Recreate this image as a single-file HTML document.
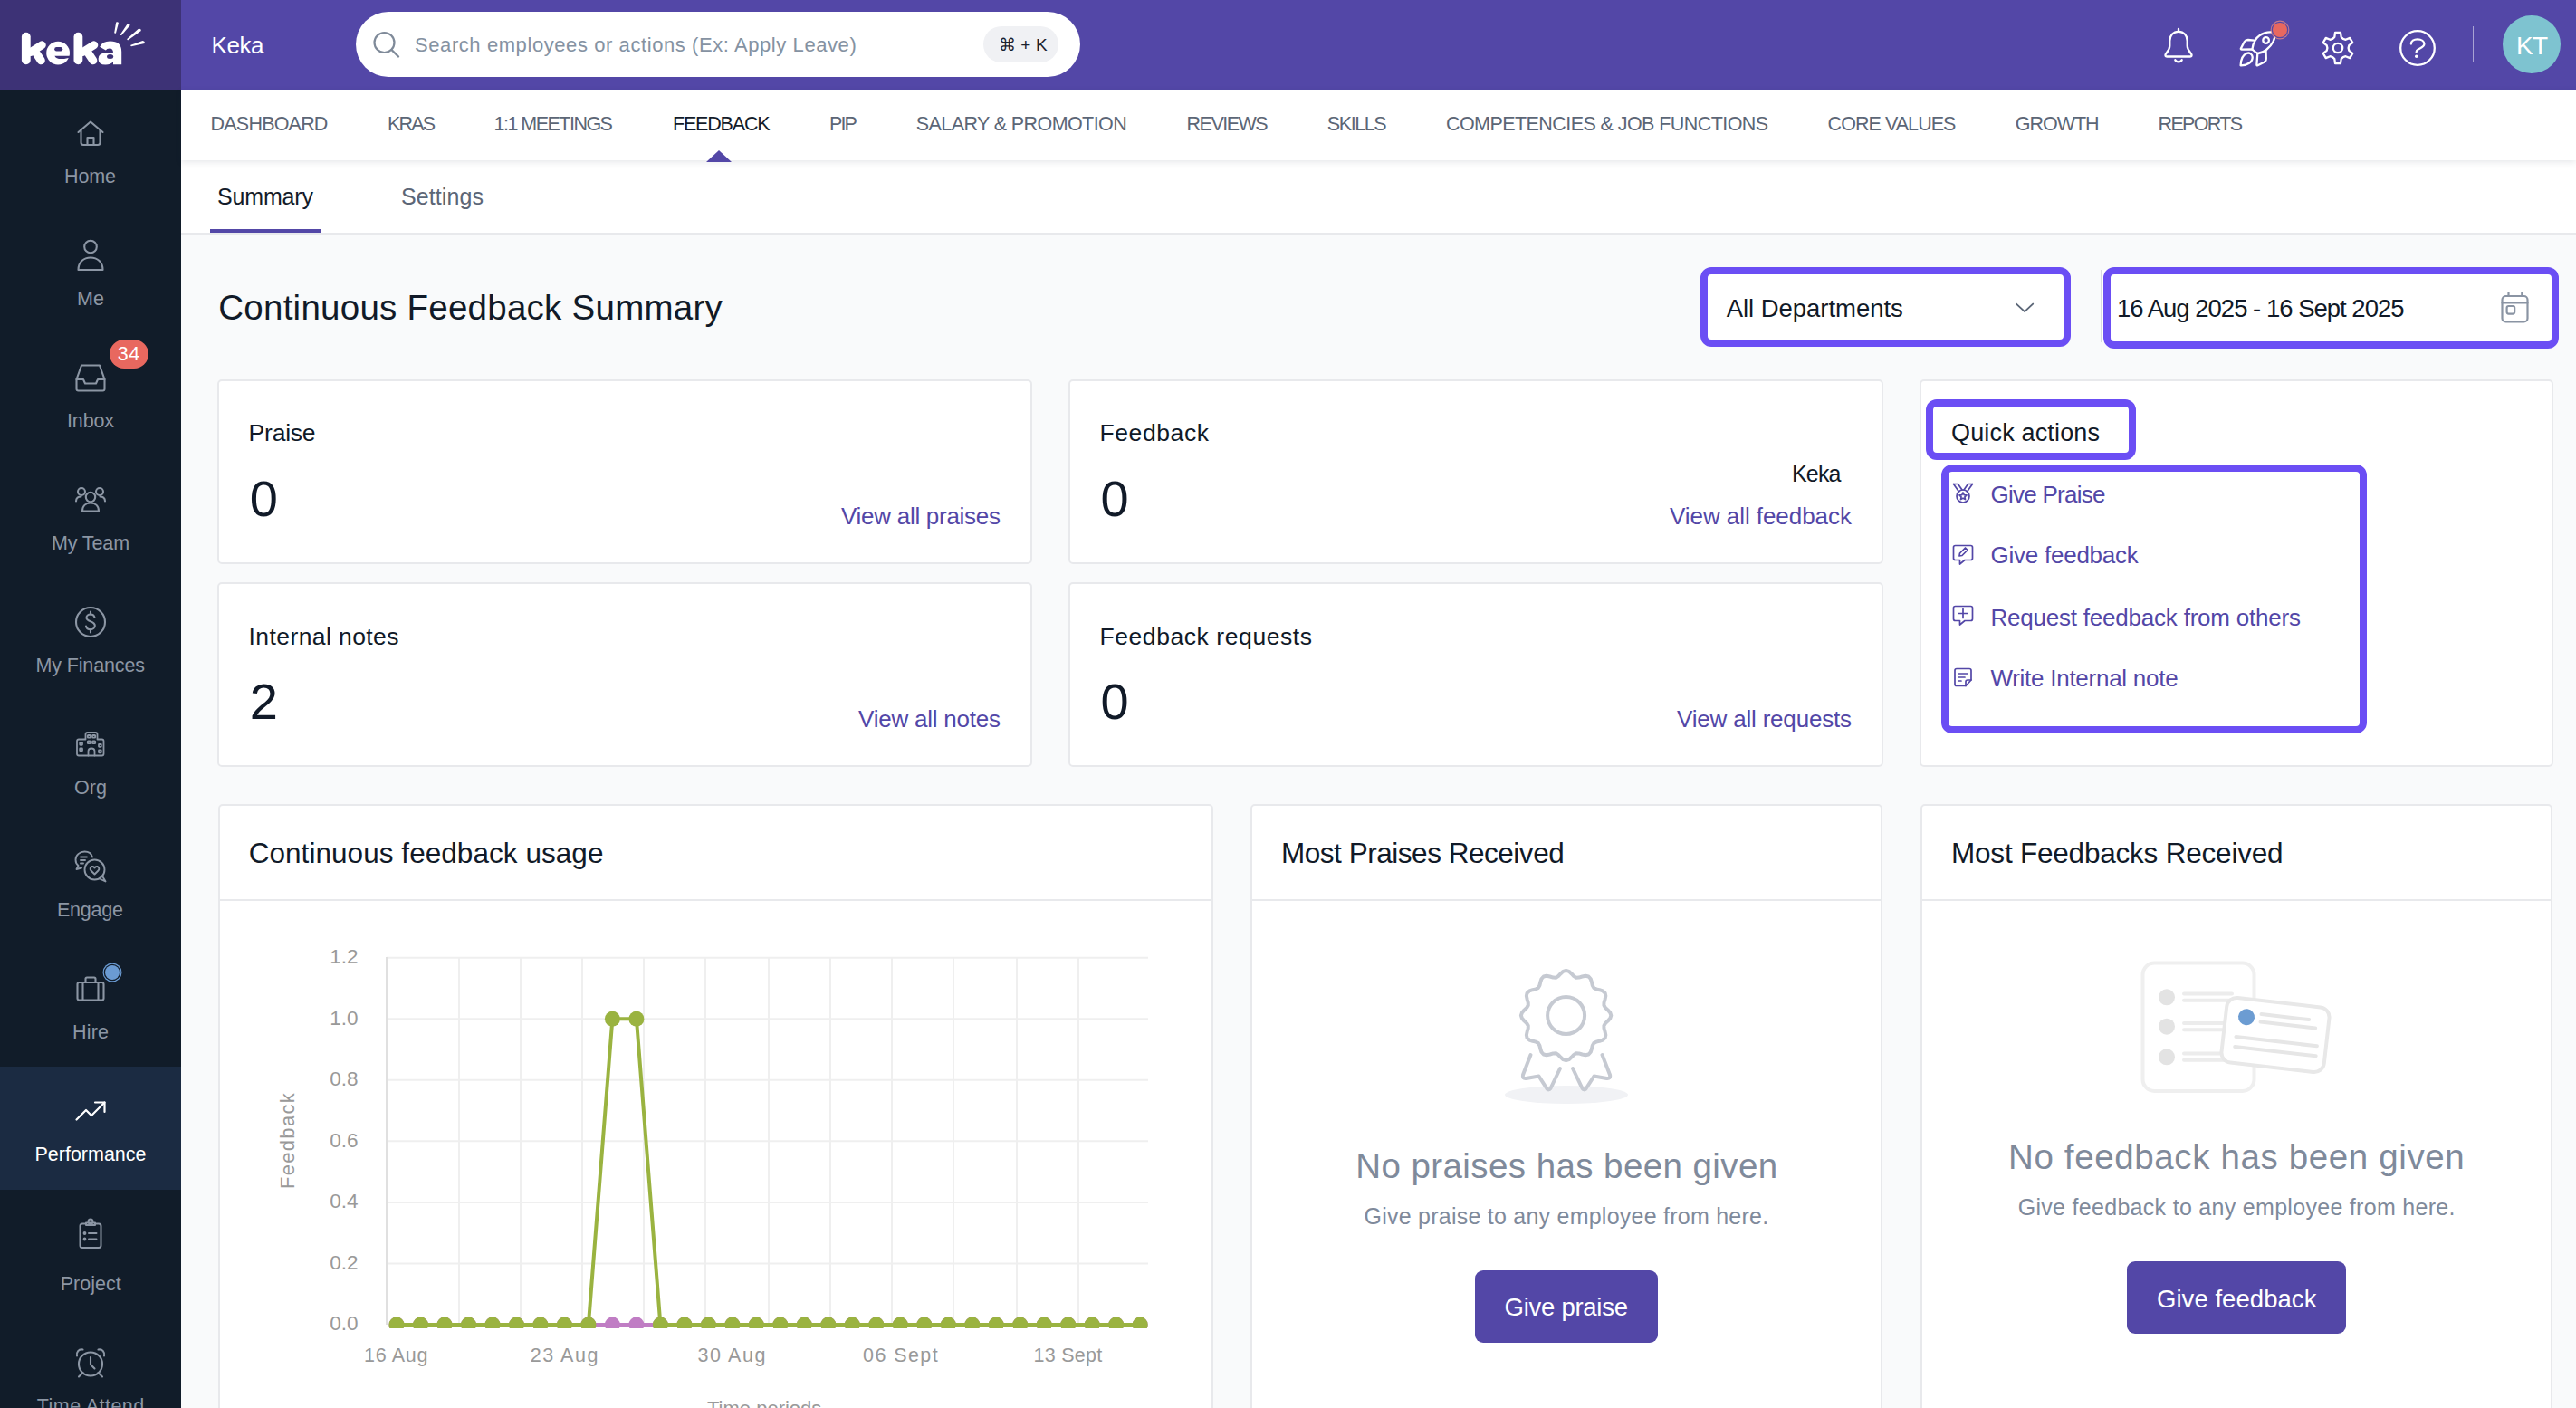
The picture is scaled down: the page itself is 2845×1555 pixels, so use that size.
<!DOCTYPE html>
<html><head><meta charset="utf-8"><title>Keka - Feedback Summary</title>
<style>
html,body{margin:0;padding:0}
body{width:2845px;height:1555px;overflow:hidden;position:relative;background:#f9fafb;font-family:"Liberation Sans",sans-serif}
.t{position:absolute;white-space:nowrap;line-height:1}
</style></head><body>
<div style="position:absolute;left:0px;top:0px;width:200px;height:99px;background:#3d3276"></div>
<div style="position:absolute;left:200px;top:0px;width:2645px;height:99px;background:#5347a7"></div>
<svg style="position:absolute;left:0px;top:0px;overflow:visible;" width="200" height="99" viewBox="0 0 200 99">
<g stroke="#fff" stroke-linecap="round" fill="none">
<path d="M28.8 40.6 L28.8 66.4" stroke-width="9.8"/>
<path d="M34 57.5 L46.3 49.8" stroke-width="9"/>
<path d="M40.5 59.5 L45.3 66.8" stroke-width="9"/>
<path d="M86.4 40.6 L86.4 66.4" stroke-width="9.8"/>
<path d="M91.5 57.5 L103.8 49.8" stroke-width="9"/>
<path d="M98 59.5 L102.8 66.8" stroke-width="9"/>
</g>
<circle cx="64.1" cy="58.6" r="12.9" fill="#fff"/>
<rect x="60.2" y="52" width="9" height="4.4" rx="2.2" fill="#3d3276"/>
<path d="M60.4 61.7 L78 61.7 L78 63.6 L71 64.9 Q62 66 60.4 61.7 Z" fill="#3d3276"/>
<path d="M110.2 51.8 Q113 45.6 121.5 45.6 Q134.2 45.6 134.2 57 L134.2 71.2 L125 71.2 L125 58.5 Q125 53.6 121 53.6 Q117.8 53.6 116.8 55.6 Z" fill="#fff"/>
<path d="M125.5 58.2 L117.5 58.2 Q108.6 58.2 108.6 65 Q108.6 71.6 116.5 71.6 Q121.8 71.6 125.5 68 Z" fill="#fff"/>
<ellipse cx="121.6" cy="62.4" rx="3.6" ry="2.5" fill="#3d3276"/>
<g fill="#fff">
<path d="M128.2 24.6 Q130.6 23.6 130.9 25.6 L128 36.6 Q126.4 37.2 126.2 36 Z"/>
<path d="M140.6 26.6 Q143.6 25.4 143.6 28 L134.2 39 Q132.8 39.4 132.9 38 Z"/>
<path d="M152.6 32 Q156 31 155.8 34 L141.5 44.2 Q140 44.4 140.3 43 Z"/>
<path d="M157.5 45 Q160.6 45.6 159.6 48 L145 51.2 Q143.8 51 144.4 49.8 Z"/>
</g>
</svg>
<div class="t" style="left:233.5px;top:37.4px;font-size:26px;color:#ffffff;letter-spacing:-0.43px;">Keka</div>
<div style="position:absolute;left:393px;top:13px;width:800px;height:72px;background:#fff;border-radius:36px"></div>
<svg style="position:absolute;left:410px;top:33px;overflow:visible;" width="34" height="32" viewBox="0 0 34 32"><circle cx="14.5" cy="14" r="11" fill="none" stroke="#7f8a99" stroke-width="2.2"/><path d="M22.5 22 L30 29.5" stroke="#7f8a99" stroke-width="2.4" stroke-linecap="round"/></svg>
<div class="t" style="left:458.0px;top:39.0px;font-size:22px;color:#8592a2;letter-spacing:0.58px;">Search employees or actions (Ex: Apply Leave)</div>
<div style="position:absolute;left:1086px;top:29px;width:83px;height:39.5px;background:#f0f1f4;border-radius:20px"></div>
<div class="t" style="left:1102.6px;top:40.2px;font-size:19px;color:#1a2230;letter-spacing:0.20px;">⌘ + K</div>
<svg style="position:absolute;left:2390px;top:31px;overflow:visible;" width="32" height="40" viewBox="0 0 32 40"><g fill="none" stroke="#fff" stroke-width="2.3" stroke-linejoin="round" stroke-linecap="round">
<path d="M16 0.9 L16 3.8"/>
<path d="M16 3.8 C10 3.8 6.3 8.5 6.3 14 L6.3 19.5 C6.3 22.5 5 24.5 3 27 L1.8 28.8 Q0.6 31.3 3.2 31.5 L28.8 31.5 Q31.4 31.3 30.2 28.8 L29 27 C27 24.5 25.7 22.5 25.7 19.5 L25.7 14 C25.7 8.5 22 3.8 16 3.8 Z"/>
<path d="M12.3 35.2 C13.5 38 18.5 38 19.7 35.2"/></g></svg>
<svg style="position:absolute;left:2474px;top:33px;overflow:visible;" width="40" height="40" viewBox="0 0 40 40"><g fill="none" stroke="#fff" stroke-width="2.3" stroke-linejoin="round" stroke-linecap="round">
<path d="M38.2 3.2 C32 1 22 3.5 17 11 C14.8 14.5 13.6 18 13.4 21.5 C15.5 23.5 17.5 25 19.5 26 C23 25.5 26.5 24 29 22 C35.5 17 39.5 9.5 38.2 3.2 Z"/>
<circle cx="28.6" cy="11.5" r="3.3"/>
<path d="M15.6 11.6 L8.8 11 Q6 11 4.8 13 L0.9 20.5 Q0.5 21.6 1.8 21.6 L13.4 21.5"/>
<path d="M28.5 22.8 L28.8 31.5 Q28.8 34.5 26.5 35.8 L19.5 39.3 Q18.4 39.8 18.4 38.5 L19.3 26"/>
<path d="M0.6 39.3 C0.8 33 3 27.5 7.5 25.8 C10.5 24.7 13.5 27 13.7 30 C14 35.5 8 39.5 0.6 39.3 Z"/>
</g></svg>
<div style="position:absolute;left:2510px;top:25px;width:16px;height:16px;border-radius:50%;background:#e8685f;box-shadow:0 0 0 1.3px #5347a7, 0 0 0 2.4px rgba(240,140,130,.75)"></div>
<svg style="position:absolute;left:2565px;top:35px;overflow:visible;" width="34" height="36" viewBox="0 0 34 36"><g fill="none" stroke="#fff" stroke-width="2.3" stroke-linejoin="round"><path d="M11.20 7.95 L13.32 5.95 L14.00 0.96 L20.00 0.96 L20.68 5.95 L22.80 7.95 L25.59 8.78 L30.25 6.88 L33.26 12.08 L29.28 15.17 L28.60 18.00 L29.28 20.83 L33.26 23.92 L30.25 29.12 L25.59 27.22 L22.80 28.05 L20.68 30.05 L20.00 35.04 L14.00 35.04 L13.32 30.05 L11.20 28.05 L8.41 27.22 L3.75 29.12 L0.74 23.92 L4.72 20.83 L5.40 18.00 L4.72 15.17 L0.74 12.08 L3.75 6.88 L8.41 8.78 Z"/><circle cx="17" cy="18" r="5.2"/></g></svg>
<svg style="position:absolute;left:2650px;top:33px;overflow:visible;" width="40" height="40" viewBox="0 0 40 40"><g fill="none" stroke="#fff" stroke-width="2.3" stroke-linecap="round" stroke-linejoin="round">
<circle cx="20" cy="20" r="18.8"/>
<path d="M12.9 15.6 C12.9 12.2 15.9 10.3 20 10.3 C24.4 10.3 27.4 12.6 27.4 15.6 C27.4 19 23.6 20 20.6 21.5 C19.2 22.3 18.6 23 18.6 24.6"/>
</g><circle cx="18.8" cy="29.3" r="1.8" fill="#fff"/></svg>
<div style="position:absolute;left:2730.5px;top:29px;width:1.5px;height:40px;background:rgba(255,255,255,.5)"></div>
<div style="position:absolute;left:2764px;top:17px;width:64px;height:64px;background:#7ec3d0;border-radius:50%"></div>
<div class="t" style="left:2779.0px;top:37.3px;font-size:28px;color:#ffffff;letter-spacing:-0.80px;">KT</div>
<div style="position:absolute;left:200px;top:99px;width:2645px;height:78px;background:#fff;box-shadow:0 2px 7px rgba(30,40,60,.11);z-index:2"></div>
<div style="position:absolute;left:200px;top:177px;width:2645px;height:82px;background:#fff;border-bottom:2px solid #e8e9ec;box-sizing:border-box"></div>
<div class="t" style="left:232.6px;top:126.8px;font-size:21.5px;color:#5c6676;letter-spacing:-0.80px;z-index:3">DASHBOARD</div>
<div class="t" style="left:428.0px;top:126.8px;font-size:21.5px;color:#5c6676;letter-spacing:-1.83px;z-index:3">KRAS</div>
<div class="t" style="left:545.6px;top:126.8px;font-size:21.5px;color:#5c6676;letter-spacing:-1.53px;z-index:3">1:1 MEETINGS</div>
<div class="t" style="left:743.0px;top:126.8px;font-size:21.5px;color:#131b29;letter-spacing:-1.19px;z-index:3">FEEDBACK</div>
<div class="t" style="left:916.0px;top:126.8px;font-size:21.5px;color:#5c6676;letter-spacing:-1.85px;z-index:3">PIP</div>
<div class="t" style="left:1011.8px;top:126.8px;font-size:21.5px;color:#5c6676;letter-spacing:-0.59px;z-index:3">SALARY &amp; PROMOTION</div>
<div class="t" style="left:1310.6px;top:126.8px;font-size:21.5px;color:#5c6676;letter-spacing:-1.53px;z-index:3">REVIEWS</div>
<div class="t" style="left:1465.8px;top:126.8px;font-size:21.5px;color:#5c6676;letter-spacing:-1.40px;z-index:3">SKILLS</div>
<div class="t" style="left:1597.0px;top:126.8px;font-size:21.5px;color:#5c6676;letter-spacing:-0.57px;z-index:3">COMPETENCIES &amp; JOB FUNCTIONS</div>
<div class="t" style="left:2018.6px;top:126.8px;font-size:21.5px;color:#5c6676;letter-spacing:-0.95px;z-index:3">CORE VALUES</div>
<div class="t" style="left:2225.7px;top:126.8px;font-size:21.5px;color:#5c6676;letter-spacing:-1.00px;z-index:3">GROWTH</div>
<div class="t" style="left:2383.6px;top:126.8px;font-size:21.5px;color:#5c6676;letter-spacing:-1.67px;z-index:3">REPORTS</div>
<svg style="position:absolute;left:780px;top:166px;overflow:visible;z-index:3" width="28" height="13" viewBox="0 0 28 13"><path d="M0 13 L14 0 L28 13 Z" fill="#5347a7"/></svg>
<div class="t" style="left:240.0px;top:204.6px;font-size:25px;color:#131b29;letter-spacing:-0.17px;">Summary</div>
<div class="t" style="left:443.0px;top:204.6px;font-size:25px;color:#5c6676;letter-spacing:0.10px;">Settings</div>
<div style="position:absolute;left:232px;top:253px;width:122px;height:4px;background:#5347a7"></div>
<div style="position:absolute;left:0px;top:99px;width:200px;height:1456px;background:#111c29"></div>
<div style="position:absolute;left:0px;top:1178px;width:200px;height:136px;background:#1b2b42"></div>
<svg style="position:absolute;left:85px;top:133px;overflow:visible;" width="30" height="28" viewBox="0 0 30 28"><g fill="none" stroke="#8c96a4" stroke-width="2.1" stroke-linecap="round" stroke-linejoin="round"><path d="M1.5 13 L15 1.5 L28.5 13"/><path d="M4.5 10.5 L4.5 24.5 Q4.5 27 7 27 L23 27 Q25.5 27 25.5 24.5 L25.5 10.5"/><path d="M11.5 27 L11.5 19 L18.5 19 L18.5 27"/></g></svg>
<svg style="position:absolute;left:85px;top:265px;overflow:visible;" width="30" height="35" viewBox="0 0 30 35"><g fill="none" stroke="#8c96a4" stroke-width="2.1" stroke-linecap="round" stroke-linejoin="round"><circle cx="15" cy="7.5" r="6.8"/><path d="M1.5 33 C1.5 24.5 7.5 19.5 15 19.5 C22.5 19.5 28.5 24.5 28.5 33 Z"/></g></svg>
<svg style="position:absolute;left:83px;top:402px;overflow:visible;" width="34" height="31" viewBox="0 0 34 31"><g fill="none" stroke="#8c96a4" stroke-width="2.1" stroke-linecap="round" stroke-linejoin="round"><path d="M7 1.5 L27 1.5 L32.5 17 L32.5 27.5 Q32.5 29.5 30.5 29.5 L3.5 29.5 Q1.5 29.5 1.5 27.5 L1.5 17 Z"/><path d="M1.5 17 L9 17 L11 21.5 L23 21.5 L25 17 L32.5 17"/></g></svg>
<div style="position:absolute;left:121px;top:375px;width:43px;height:32px;border-radius:16px;background:#e8685f"></div>
<div class="t" style="left:129.8px;top:381.3px;font-size:21.5px;color:#ffffff;letter-spacing:0.60px;">34</div>
<svg style="position:absolute;left:83px;top:538px;overflow:visible;" width="34" height="28" viewBox="0 0 34 28"><g fill="none" stroke="#8c96a4" stroke-width="2.1" stroke-linecap="round" stroke-linejoin="round"><circle cx="17" cy="11" r="5.2"/><path d="M8 26.5 C8 20.5 12 17.5 17 17.5 C22 17.5 26 20.5 26 26.5 Z"/><circle cx="7" cy="5" r="4"/><circle cx="27" cy="5" r="4"/><path d="M1 15.5 C1 12 3.5 10.5 6.5 10.5"/><path d="M33 15.5 C33 12 30.5 10.5 27.5 10.5"/></g></svg>
<svg style="position:absolute;left:83px;top:670px;overflow:visible;" width="34" height="34" viewBox="0 0 34 34"><g fill="none" stroke="#8c96a4" stroke-width="2.1" stroke-linecap="round" stroke-linejoin="round"><circle cx="17" cy="17" r="16"/><path d="M21.5 12 C21 9.5 19 8.5 17 8.5 C14.5 8.5 12.5 10 12.5 12.2 C12.5 17 21.8 15.5 21.8 21 C21.8 23.5 19.5 25.2 17 25.2 C14.5 25.2 12.5 24 12 21.5"/><path d="M17 5.5 L17 8.5 M17 25.2 L17 28.5"/></g></svg>
<svg style="position:absolute;left:84px;top:808px;overflow:visible;" width="32" height="28" viewBox="0 0 32 28"><g fill="none" stroke="#8c96a4" stroke-width="1.8" stroke-linecap="round" stroke-linejoin="round"><path d="M10.5 8.5 L10.5 3 Q10.5 1 12.5 1 L21.5 1 Q23.5 1 23.5 3 L23.5 8.5 L28.5 8.5 Q30.5 8.5 30.5 10.5 L30.5 24.5 Q30.5 26.5 28.5 26.5 L3 26.5 Q1 26.5 1 24.5 L1 10.5 Q1 8.5 3 8.5 Z"/><path d="M13.5 26.5 L13.5 21.5 Q13.5 18.5 17 18.5 Q20.5 18.5 20.5 21.5 L20.5 26.5"/><rect x="12.8" y="4" width="3.2" height="2.6" rx=".6"/><rect x="18" y="4" width="3.2" height="2.6" rx=".6"/><rect x="12.8" y="10.5" width="3.2" height="2.6" rx=".6"/><rect x="18" y="10.5" width="3.2" height="2.6" rx=".6"/><rect x="4.2" y="12" width="2.8" height="2.8" rx=".5"/><rect x="4.2" y="18.5" width="2.8" height="2.8" rx=".5"/><rect x="25" y="14" width="2.8" height="2.8" rx=".5"/><rect x="25" y="20.5" width="2.8" height="2.8" rx=".5"/></g></svg>
<svg style="position:absolute;left:82px;top:939px;overflow:visible;" width="36" height="36" viewBox="0 0 36 36"><g fill="none" stroke="#8c96a4" stroke-width="1.9" stroke-linecap="round" stroke-linejoin="round"><path d="M20 7.5 C19 3.5 15.5 1.5 11.5 1.5 C6 1.5 1.5 5.5 1.5 10.5 C1.5 13 2.5 15.5 4.5 17 L2.5 21 L8 19.5"/><path d="M7 7.5 L14 7.5 M7 11 L12 11 M7 14.5 L10 14.5"/><circle cx="22.5" cy="21.5" r="11"/><path d="M31 28.5 L34.5 34.5 L28 31.5"/><path d="M22.5 26.5 L18.5 22.5 C17 21 17.5 18.5 19.5 18 C21 17.7 22 18.5 22.5 19.5 C23 18.5 24 17.7 25.5 18 C27.5 18.5 28 21 26.5 22.5 Z"/></g></svg>
<svg style="position:absolute;left:84px;top:1078px;overflow:visible;" width="32" height="28" viewBox="0 0 32 28"><g fill="none" stroke="#8c96a4" stroke-width="2.1" stroke-linecap="round" stroke-linejoin="round"><path d="M3.5 7 L28.5 7 Q30.5 7 30.5 9 L30.5 24.5 Q30.5 26.5 28.5 26.5 L3.5 26.5 Q1.5 26.5 1.5 24.5 L1.5 9 Q1.5 7 3.5 7 Z"/><path d="M10.5 7 L10.5 3 Q10.5 1.5 12 1.5 L20 1.5 Q21.5 1.5 21.5 3 L21.5 7"/><path d="M7.5 7 L7.5 26.5 M24.5 7 L24.5 26.5"/></g></svg>
<div style="position:absolute;left:116px;top:1066px;width:16px;height:16px;border-radius:50%;background:#6b9bd3;box-shadow:0 0 0 1.3px #111c29, 0 0 0 2.5px #6b9bd3"></div>
<svg style="position:absolute;left:83px;top:1216px;overflow:visible;" width="34" height="22" viewBox="0 0 34 22"><g fill="none" stroke="#ffffff" stroke-width="2.2" stroke-linecap="round" stroke-linejoin="round"><path d="M1.5 20.5 L12 10 L18 16 L32.5 1.5"/><path d="M22 1.5 L32.5 1.5 L32.5 12"/></g></svg>
<svg style="position:absolute;left:87px;top:1345px;overflow:visible;" width="26" height="34" viewBox="0 0 26 34"><g fill="none" stroke="#8c96a4" stroke-width="2" stroke-linecap="round" stroke-linejoin="round"><path d="M8 6.5 L4 6.5 Q1.5 6.5 1.5 9 L1.5 30.5 Q1.5 33 4 33 L22 33 Q24.5 33 24.5 30.5 L24.5 9 Q24.5 6.5 22 6.5 L18 6.5"/><path d="M8 8 L18 8 L18 5.5 L8 5.5 Z"/><circle cx="13" cy="4" r="2.5"/><path d="M11 17 L19.5 17 M11 23.5 L19.5 23.5"/><circle cx="6.5" cy="17" r=".9" fill="#8c96a4"/><circle cx="6.5" cy="23.5" r=".9" fill="#8c96a4"/></g></svg>
<svg style="position:absolute;left:83px;top:1488px;overflow:visible;" width="34" height="34" viewBox="0 0 34 34"><g fill="none" stroke="#8c96a4" stroke-width="2.1" stroke-linecap="round" stroke-linejoin="round"><circle cx="17" cy="18.5" r="13"/><path d="M17 11 L17 19 L21.5 23.5"/><path d="M2 9.5 C1 5.5 4 1.5 8.5 2.5"/><path d="M32 9.5 C33 5.5 30 1.5 25.5 2.5"/><path d="M8.5 28 L4 32.5 M25.5 28 L30 32.5"/></g></svg>
<div class="t" style="left:71.0px;top:184.8px;font-size:21.5px;color:#8c96a4;letter-spacing:-0.13px;">Home</div>
<div class="t" style="left:85.0px;top:319.8px;font-size:21.5px;color:#8c96a4;letter-spacing:0.10px;">Me</div>
<div class="t" style="left:74.0px;top:454.8px;font-size:21.5px;color:#8c96a4;letter-spacing:-0.15px;">Inbox</div>
<div class="t" style="left:57.0px;top:590.2px;font-size:21.5px;color:#8c96a4;letter-spacing:-0.13px;">My Team</div>
<div class="t" style="left:39.5px;top:725.1px;font-size:21.5px;color:#8c96a4;letter-spacing:-0.14px;">My Finances</div>
<div class="t" style="left:82.0px;top:860.1px;font-size:21.5px;color:#8c96a4;letter-spacing:0.10px;">Org</div>
<div class="t" style="left:63.0px;top:994.8px;font-size:21.5px;color:#8c96a4;letter-spacing:-0.22px;">Engage</div>
<div class="t" style="left:80.0px;top:1129.8px;font-size:21.5px;color:#8c96a4;letter-spacing:0.20px;">Hire</div>
<div class="t" style="left:66.7px;top:1408.3px;font-size:21.5px;color:#8c96a4;letter-spacing:0.03px;">Project</div>
<div class="t" style="left:40.8px;top:1543.2px;font-size:21.5px;color:#8c96a4;letter-spacing:0.45px;">Time Attend</div>
<div class="t" style="left:38.5px;top:1264.8px;font-size:21.5px;color:#ffffff;letter-spacing:-0.01px;">Performance</div>
<div class="t" style="left:241.3px;top:321.4px;font-size:38.5px;color:#111a28;letter-spacing:0.25px;">Continuous Feedback Summary</div>
<div style="position:absolute;left:1878px;top:294.5px;width:408.5px;height:88.5px;background:#fff;border:8px solid #6b4ef4;border-radius:12px;box-sizing:border-box"></div>
<div class="t" style="left:1906.7px;top:326.7px;font-size:27.5px;color:#111a28;letter-spacing:-0.04px;">All Departments</div>
<svg style="position:absolute;left:2224px;top:333px;overflow:visible;" width="23" height="13" viewBox="0 0 23 13"><path d="M2.9 2.6 L12.1 11.1 L21.2 2.6" fill="none" stroke="#5b6677" stroke-width="1.9" stroke-linecap="round" stroke-linejoin="round"/></svg>
<div style="position:absolute;left:2320px;top:298px;width:13px;height:80px;background:#fff;border-left:1.5px solid #d9dce2"></div>
<div style="position:absolute;left:2322.5px;top:294.5px;width:503.5px;height:90.0px;background:#fff;border:8px solid #6b4ef4;border-radius:12px;box-sizing:border-box"></div>
<div class="t" style="left:2338.0px;top:326.7px;font-size:27.5px;color:#111a28;letter-spacing:-1.00px;">16 Aug 2025 - 16 Sept 2025</div>
<svg style="position:absolute;left:2762px;top:322px;overflow:visible;" width="31" height="34" viewBox="0 0 31 34"><g fill="none" stroke="#8a94a3" stroke-width="2.2" stroke-linecap="round" stroke-linejoin="round">
<rect x="1.5" y="5" width="28" height="28.5" rx="4"/><path d="M1.5 12.5 L29.5 12.5"/><path d="M8.5 1.2 L8.5 5 M23.3 1.2 L23.3 5"/><rect x="6.6" y="16" width="8.6" height="8.6" rx="2"/></g></svg>
<div style="position:absolute;left:240px;top:419px;width:900px;height:204px;background:#fff;border:2px solid #e8e9ec;border-radius:5px;box-sizing:border-box"></div>
<div style="position:absolute;left:1180px;top:419px;width:900px;height:204px;background:#fff;border:2px solid #e8e9ec;border-radius:5px;box-sizing:border-box"></div>
<div style="position:absolute;left:240px;top:643px;width:900px;height:204px;background:#fff;border:2px solid #e8e9ec;border-radius:5px;box-sizing:border-box"></div>
<div style="position:absolute;left:1180px;top:643px;width:900px;height:204px;background:#fff;border:2px solid #e8e9ec;border-radius:5px;box-sizing:border-box"></div>
<div style="position:absolute;left:2120px;top:419px;width:700px;height:428px;background:#fff;border:2px solid #e8e9ec;border-radius:5px;box-sizing:border-box"></div>
<div class="t" style="left:274.6px;top:465.1px;font-size:26.5px;color:#111a28;letter-spacing:-0.22px;">Praise</div>
<div class="t" style="left:275.7px;top:523.3px;font-size:56px;color:#111a28;letter-spacing:0.00px;">0</div>
<div class="t" style="left:929.0px;top:556.6px;font-size:26px;color:#5347a7;letter-spacing:-0.28px;">View all praises</div>
<div class="t" style="left:1214.5px;top:465.1px;font-size:26.5px;color:#111a28;letter-spacing:0.59px;">Feedback</div>
<div class="t" style="left:1215.5px;top:523.3px;font-size:56px;color:#111a28;letter-spacing:0.00px;">0</div>
<div class="t" style="left:1979.0px;top:510.8px;font-size:25px;color:#111a28;letter-spacing:-0.83px;">Keka</div>
<div class="t" style="left:1844.0px;top:556.6px;font-size:26px;color:#5347a7;letter-spacing:-0.06px;">View all feedback</div>
<div class="t" style="left:274.6px;top:689.6px;font-size:26.5px;color:#111a28;letter-spacing:0.41px;">Internal notes</div>
<div class="t" style="left:275.7px;top:746.9px;font-size:56px;color:#111a28;letter-spacing:0.00px;">2</div>
<div class="t" style="left:948.0px;top:780.5px;font-size:26px;color:#5347a7;letter-spacing:-0.22px;">View all notes</div>
<div class="t" style="left:1214.5px;top:689.6px;font-size:26.5px;color:#111a28;letter-spacing:0.57px;">Feedback requests</div>
<div class="t" style="left:1215.5px;top:746.9px;font-size:56px;color:#111a28;letter-spacing:0.00px;">0</div>
<div class="t" style="left:1852.0px;top:780.5px;font-size:26px;color:#5347a7;letter-spacing:-0.19px;">View all requests</div>
<div style="position:absolute;left:2126.5px;top:441.3px;width:232.5px;height:66.69999999999999px;border:8px solid #6b4ef4;border-radius:12px;box-sizing:border-box"></div>
<div class="t" style="left:2155.0px;top:465.4px;font-size:27px;color:#111a28;letter-spacing:0.16px;">Quick actions</div>
<div style="position:absolute;left:2143.8px;top:513px;width:470.6999999999998px;height:296.5px;border:8px solid #6b4ef4;border-radius:12px;box-sizing:border-box"></div>
<svg style="position:absolute;left:2156px;top:533px;overflow:visible;" width="24" height="24" viewBox="0 0 24 24"><g fill="none" stroke="#5347a7" stroke-width="1.7" stroke-linecap="round" stroke-linejoin="round"><path d="M1.5 1.5 L7.5 10 M22.5 1.5 L16.5 10 M1.5 1.5 L6.5 1.5 L11 8 M22.5 1.5 L17.5 1.5 L13 8"/><circle cx="12" cy="15" r="7"/><path d="M12 11 L13.2 13.6 L16 13.9 L13.9 15.8 L14.5 18.6 L12 17.2 L9.5 18.6 L10.1 15.8 L8 13.9 L10.8 13.6 Z"/></g></svg>
<svg style="position:absolute;left:2156px;top:601px;overflow:visible;" width="24" height="24" viewBox="0 0 24 24"><g fill="none" stroke="#5347a7" stroke-width="1.7" stroke-linecap="round" stroke-linejoin="round"><path d="M3.5 1.5 L20.5 1.5 Q22.5 1.5 22.5 3.5 L22.5 15.5 Q22.5 17.5 20.5 17.5 L14 17.5 L8.5 22 L8.5 17.5 L3.5 17.5 Q1.5 17.5 1.5 15.5 L1.5 3.5 Q1.5 1.5 3.5 1.5 Z"/><path d="M8 13 L8.5 10 L14.5 4 L17 6.5 L11 12.5 Z"/></g></svg>
<svg style="position:absolute;left:2156px;top:668px;overflow:visible;" width="24" height="24" viewBox="0 0 24 24"><g fill="none" stroke="#5347a7" stroke-width="1.7" stroke-linecap="round" stroke-linejoin="round"><path d="M3.5 1.5 L20.5 1.5 Q22.5 1.5 22.5 3.5 L22.5 15.5 Q22.5 17.5 20.5 17.5 L14 17.5 L8.5 22 L8.5 17.5 L3.5 17.5 Q1.5 17.5 1.5 15.5 L1.5 3.5 Q1.5 1.5 3.5 1.5 Z"/><path d="M12 4.5 L12 14.5 M7 9.5 L17 9.5"/></g></svg>
<svg style="position:absolute;left:2156px;top:736px;overflow:visible;" width="24" height="24" viewBox="0 0 24 24"><g fill="none" stroke="#5347a7" stroke-width="1.7" stroke-linecap="round" stroke-linejoin="round"><path d="M5 2.5 L19 2.5 Q21 2.5 21 4.5 L21 15 L15 21.5 L5 21.5 Q3 21.5 3 19.5 L3 4.5 Q3 2.5 5 2.5 Z"/><path d="M15 21.5 L15 17 Q15 15 17 15 L21 15"/><path d="M7 8 L17 8 M7 12 L14 12 M7 16 L10 16"/></g></svg>
<div class="t" style="left:2198.4px;top:532.5px;font-size:26px;color:#5347a7;letter-spacing:-0.72px;">Give Praise</div>
<div class="t" style="left:2198.4px;top:600.2px;font-size:26px;color:#5347a7;letter-spacing:-0.23px;">Give feedback</div>
<div class="t" style="left:2198.4px;top:668.6px;font-size:26px;color:#5347a7;letter-spacing:-0.21px;">Request feedback from others</div>
<div class="t" style="left:2198.4px;top:736.3px;font-size:26px;color:#5347a7;letter-spacing:-0.26px;">Write Internal note</div>
<div style="position:absolute;left:241px;top:887.5px;width:1098.5px;height:712.5px;background:#fff;border:2px solid #e8e9ec;border-radius:5px;box-sizing:border-box"></div>
<div style="position:absolute;left:242px;top:993px;width:1096.5px;height:2px;background:#e8e9ec"></div>
<div style="position:absolute;left:1381px;top:887.5px;width:698px;height:712.5px;background:#fff;border:2px solid #e8e9ec;border-radius:5px;box-sizing:border-box"></div>
<div style="position:absolute;left:1382px;top:993px;width:696px;height:2px;background:#e8e9ec"></div>
<div style="position:absolute;left:2121px;top:887.5px;width:698px;height:712.5px;background:#fff;border:2px solid #e8e9ec;border-radius:5px;box-sizing:border-box"></div>
<div style="position:absolute;left:2122px;top:993px;width:696px;height:2px;background:#e8e9ec"></div>
<div class="t" style="left:274.7px;top:926.7px;font-size:31.5px;color:#111a28;letter-spacing:0.05px;">Continuous feedback usage</div>
<div class="t" style="left:1415.0px;top:927.2px;font-size:31.5px;color:#111a28;letter-spacing:-0.47px;">Most Praises Received</div>
<div class="t" style="left:2155.0px;top:927.2px;font-size:31.5px;color:#111a28;letter-spacing:-0.21px;">Most Feedbacks Received</div>
<svg style="position:absolute;left:0;top:0" width="2845" height="1555"><line x1="427" y1="1057.7" x2="1268" y2="1057.7" stroke="#efefef" stroke-width="2"/><line x1="427" y1="1125.2" x2="1268" y2="1125.2" stroke="#efefef" stroke-width="2"/><line x1="427" y1="1192.8" x2="1268" y2="1192.8" stroke="#efefef" stroke-width="2"/><line x1="427" y1="1260.3" x2="1268" y2="1260.3" stroke="#efefef" stroke-width="2"/><line x1="427" y1="1327.9" x2="1268" y2="1327.9" stroke="#efefef" stroke-width="2"/><line x1="427" y1="1395.5" x2="1268" y2="1395.5" stroke="#efefef" stroke-width="2"/><line x1="507" y1="1057" x2="507" y2="1463" stroke="#efefef" stroke-width="2"/><line x1="575" y1="1057" x2="575" y2="1463" stroke="#efefef" stroke-width="2"/><line x1="643" y1="1057" x2="643" y2="1463" stroke="#efefef" stroke-width="2"/><line x1="711" y1="1057" x2="711" y2="1463" stroke="#efefef" stroke-width="2"/><line x1="779" y1="1057" x2="779" y2="1463" stroke="#efefef" stroke-width="2"/><line x1="849" y1="1057" x2="849" y2="1463" stroke="#efefef" stroke-width="2"/><line x1="917" y1="1057" x2="917" y2="1463" stroke="#efefef" stroke-width="2"/><line x1="985" y1="1057" x2="985" y2="1463" stroke="#efefef" stroke-width="2"/><line x1="1053" y1="1057" x2="1053" y2="1463" stroke="#efefef" stroke-width="2"/><line x1="1123" y1="1057" x2="1123" y2="1463" stroke="#efefef" stroke-width="2"/><line x1="1191" y1="1057" x2="1191" y2="1463" stroke="#efefef" stroke-width="2"/><line x1="427" y1="1057" x2="427" y2="1463" stroke="#e0e0e0" stroke-width="2"/><defs><clipPath id="pc"><rect x="427" y="1040" width="860" height="427"/></clipPath></defs><g clip-path="url(#pc)"><polyline fill="none" stroke="#c07dc4" stroke-width="4" points="438.0,1463.0 464.5,1463.0 491.0,1463.0 517.5,1463.0 544.0,1463.0 570.5,1463.0 596.9,1463.0 623.4,1463.0 649.9,1463.0 676.4,1463.0 702.9,1463.0 729.4,1463.0 755.9,1463.0 782.4,1463.0 808.9,1463.0 835.3,1463.0 861.8,1463.0 888.3,1463.0 914.8,1463.0 941.3,1463.0 967.8,1463.0 994.3,1463.0 1020.8,1463.0 1047.3,1463.0 1073.8,1463.0 1100.2,1463.0 1126.7,1463.0 1153.2,1463.0 1179.7,1463.0 1206.2,1463.0 1232.7,1463.0 1259.2,1463.0"/><circle cx="438.0" cy="1463.0" r="8.5" fill="#c07dc4"/><circle cx="464.5" cy="1463.0" r="8.5" fill="#c07dc4"/><circle cx="491.0" cy="1463.0" r="8.5" fill="#c07dc4"/><circle cx="517.5" cy="1463.0" r="8.5" fill="#c07dc4"/><circle cx="544.0" cy="1463.0" r="8.5" fill="#c07dc4"/><circle cx="570.5" cy="1463.0" r="8.5" fill="#c07dc4"/><circle cx="596.9" cy="1463.0" r="8.5" fill="#c07dc4"/><circle cx="623.4" cy="1463.0" r="8.5" fill="#c07dc4"/><circle cx="649.9" cy="1463.0" r="8.5" fill="#c07dc4"/><circle cx="676.4" cy="1463.0" r="8.5" fill="#c07dc4"/><circle cx="702.9" cy="1463.0" r="8.5" fill="#c07dc4"/><circle cx="729.4" cy="1463.0" r="8.5" fill="#c07dc4"/><circle cx="755.9" cy="1463.0" r="8.5" fill="#c07dc4"/><circle cx="782.4" cy="1463.0" r="8.5" fill="#c07dc4"/><circle cx="808.9" cy="1463.0" r="8.5" fill="#c07dc4"/><circle cx="835.3" cy="1463.0" r="8.5" fill="#c07dc4"/><circle cx="861.8" cy="1463.0" r="8.5" fill="#c07dc4"/><circle cx="888.3" cy="1463.0" r="8.5" fill="#c07dc4"/><circle cx="914.8" cy="1463.0" r="8.5" fill="#c07dc4"/><circle cx="941.3" cy="1463.0" r="8.5" fill="#c07dc4"/><circle cx="967.8" cy="1463.0" r="8.5" fill="#c07dc4"/><circle cx="994.3" cy="1463.0" r="8.5" fill="#c07dc4"/><circle cx="1020.8" cy="1463.0" r="8.5" fill="#c07dc4"/><circle cx="1047.3" cy="1463.0" r="8.5" fill="#c07dc4"/><circle cx="1073.8" cy="1463.0" r="8.5" fill="#c07dc4"/><circle cx="1100.2" cy="1463.0" r="8.5" fill="#c07dc4"/><circle cx="1126.7" cy="1463.0" r="8.5" fill="#c07dc4"/><circle cx="1153.2" cy="1463.0" r="8.5" fill="#c07dc4"/><circle cx="1179.7" cy="1463.0" r="8.5" fill="#c07dc4"/><circle cx="1206.2" cy="1463.0" r="8.5" fill="#c07dc4"/><circle cx="1232.7" cy="1463.0" r="8.5" fill="#c07dc4"/><circle cx="1259.2" cy="1463.0" r="8.5" fill="#c07dc4"/><polyline fill="none" stroke="#9ab340" stroke-width="4" stroke-linejoin="round" points="438.0,1463.0 464.5,1463.0 491.0,1463.0 517.5,1463.0 544.0,1463.0 570.5,1463.0 596.9,1463.0 623.4,1463.0 649.9,1463.0 676.4,1125.2 702.9,1125.2 729.4,1463.0 755.9,1463.0 782.4,1463.0 808.9,1463.0 835.3,1463.0 861.8,1463.0 888.3,1463.0 914.8,1463.0 941.3,1463.0 967.8,1463.0 994.3,1463.0 1020.8,1463.0 1047.3,1463.0 1073.8,1463.0 1100.2,1463.0 1126.7,1463.0 1153.2,1463.0 1179.7,1463.0 1206.2,1463.0 1232.7,1463.0 1259.2,1463.0"/><circle cx="438.0" cy="1463.0" r="8.5" fill="#9ab340"/><circle cx="464.5" cy="1463.0" r="8.5" fill="#9ab340"/><circle cx="491.0" cy="1463.0" r="8.5" fill="#9ab340"/><circle cx="517.5" cy="1463.0" r="8.5" fill="#9ab340"/><circle cx="544.0" cy="1463.0" r="8.5" fill="#9ab340"/><circle cx="570.5" cy="1463.0" r="8.5" fill="#9ab340"/><circle cx="596.9" cy="1463.0" r="8.5" fill="#9ab340"/><circle cx="623.4" cy="1463.0" r="8.5" fill="#9ab340"/><circle cx="649.9" cy="1463.0" r="8.5" fill="#9ab340"/><circle cx="729.4" cy="1463.0" r="8.5" fill="#9ab340"/><circle cx="755.9" cy="1463.0" r="8.5" fill="#9ab340"/><circle cx="782.4" cy="1463.0" r="8.5" fill="#9ab340"/><circle cx="808.9" cy="1463.0" r="8.5" fill="#9ab340"/><circle cx="835.3" cy="1463.0" r="8.5" fill="#9ab340"/><circle cx="861.8" cy="1463.0" r="8.5" fill="#9ab340"/><circle cx="888.3" cy="1463.0" r="8.5" fill="#9ab340"/><circle cx="914.8" cy="1463.0" r="8.5" fill="#9ab340"/><circle cx="941.3" cy="1463.0" r="8.5" fill="#9ab340"/><circle cx="967.8" cy="1463.0" r="8.5" fill="#9ab340"/><circle cx="994.3" cy="1463.0" r="8.5" fill="#9ab340"/><circle cx="1020.8" cy="1463.0" r="8.5" fill="#9ab340"/><circle cx="1047.3" cy="1463.0" r="8.5" fill="#9ab340"/><circle cx="1073.8" cy="1463.0" r="8.5" fill="#9ab340"/><circle cx="1100.2" cy="1463.0" r="8.5" fill="#9ab340"/><circle cx="1126.7" cy="1463.0" r="8.5" fill="#9ab340"/><circle cx="1153.2" cy="1463.0" r="8.5" fill="#9ab340"/><circle cx="1179.7" cy="1463.0" r="8.5" fill="#9ab340"/><circle cx="1206.2" cy="1463.0" r="8.5" fill="#9ab340"/><circle cx="1232.7" cy="1463.0" r="8.5" fill="#9ab340"/><circle cx="1259.2" cy="1463.0" r="8.5" fill="#9ab340"/><circle cx="676.4" cy="1125.2" r="8.5" fill="#9ab340"/><circle cx="702.9" cy="1125.2" r="8.5" fill="#9ab340"/></g></svg>
<div class="t" style="left:364.2px;top:1046.0px;font-size:22.5px;color:#999999;letter-spacing:0.00px;">1.2</div>
<div class="t" style="left:364.2px;top:1113.6px;font-size:22.5px;color:#999999;letter-spacing:0.00px;">1.0</div>
<div class="t" style="left:364.2px;top:1181.1px;font-size:22.5px;color:#999999;letter-spacing:0.00px;">0.8</div>
<div class="t" style="left:364.2px;top:1248.7px;font-size:22.5px;color:#999999;letter-spacing:0.00px;">0.6</div>
<div class="t" style="left:364.2px;top:1316.2px;font-size:22.5px;color:#999999;letter-spacing:0.00px;">0.4</div>
<div class="t" style="left:364.2px;top:1383.8px;font-size:22.5px;color:#999999;letter-spacing:0.00px;">0.2</div>
<div class="t" style="left:364.2px;top:1451.3px;font-size:22.5px;color:#999999;letter-spacing:0.00px;">0.0</div>
<div class="t" style="left:402.0px;top:1486.8px;font-size:21.5px;color:#999999;letter-spacing:0.68px;">16 Aug</div>
<div class="t" style="left:585.8px;top:1486.8px;font-size:21.5px;color:#999999;letter-spacing:1.54px;">23 Aug</div>
<div class="t" style="left:770.5px;top:1486.8px;font-size:21.5px;color:#999999;letter-spacing:1.60px;">30 Aug</div>
<div class="t" style="left:953.0px;top:1486.8px;font-size:21.5px;color:#999999;letter-spacing:1.42px;">06 Sept</div>
<div class="t" style="left:1141.4px;top:1486.8px;font-size:21.5px;color:#999999;letter-spacing:0.30px;">13 Sept</div>
<div class="t" style="left:306.7px;top:1312.5px;font-size:22px;letter-spacing:1.3px;color:#999;transform:rotate(-90deg);transform-origin:0 0">Feedback</div>
<div class="t" style="left:781.0px;top:1545.4px;font-size:22px;color:#999999;letter-spacing:0.00px;">Time periods</div>
<svg style="position:absolute;left:0;top:0" width="2845" height="1555"><ellipse cx="1730" cy="1209" rx="68" ry="10" fill="#f1f2f5"/>
<g fill="none" stroke="#c6cad2" stroke-width="4" stroke-linecap="round" stroke-linejoin="round">
<path d="M1729.60 1071.80 L1732.79 1072.84 L1735.67 1075.40 L1738.23 1078.11 L1740.81 1079.68 L1743.82 1079.61 L1747.39 1078.54 L1751.17 1077.77 L1754.45 1078.46 L1756.69 1080.96 L1757.91 1084.61 L1758.77 1088.24 L1760.22 1090.88 L1762.86 1092.33 L1766.49 1093.19 L1770.14 1094.41 L1772.64 1096.65 L1773.33 1099.93 L1772.56 1103.71 L1771.49 1107.28 L1771.42 1110.29 L1772.99 1112.87 L1775.70 1115.43 L1778.26 1118.31 L1779.30 1121.50 L1778.26 1124.69 L1775.70 1127.57 L1772.99 1130.13 L1771.42 1132.71 L1771.49 1135.72 L1772.56 1139.29 L1773.33 1143.07 L1772.64 1146.35 L1770.14 1148.59 L1766.49 1149.81 L1762.86 1150.67 L1760.22 1152.12 L1758.77 1154.76 L1757.91 1158.39 L1756.69 1162.04 L1754.45 1164.54 L1751.17 1165.23 L1747.39 1164.46 L1743.82 1163.39 L1740.81 1163.32 L1738.23 1164.89 L1735.67 1167.60 L1732.79 1170.16 L1729.60 1171.20 L1726.41 1170.16 L1723.53 1167.60 L1720.97 1164.89 L1718.39 1163.32 L1715.38 1163.39 L1711.81 1164.46 L1708.03 1165.23 L1704.75 1164.54 L1702.51 1162.04 L1701.29 1158.39 L1700.43 1154.76 L1698.98 1152.12 L1696.34 1150.67 L1692.71 1149.81 L1689.06 1148.59 L1686.56 1146.35 L1685.87 1143.07 L1686.64 1139.29 L1687.71 1135.72 L1687.78 1132.71 L1686.21 1130.13 L1683.50 1127.57 L1680.94 1124.69 L1679.90 1121.50 L1680.94 1118.31 L1683.50 1115.43 L1686.21 1112.87 L1687.78 1110.29 L1687.71 1107.28 L1686.64 1103.71 L1685.87 1099.93 L1686.56 1096.65 L1689.06 1094.41 L1692.71 1093.19 L1696.34 1092.33 L1698.98 1090.88 L1700.43 1088.24 L1701.29 1084.61 L1702.51 1080.96 L1704.75 1078.46 L1708.03 1077.77 L1711.81 1078.54 L1715.38 1079.61 L1718.39 1079.68 L1720.97 1078.11 L1723.53 1075.40 L1726.41 1072.84 L1729.60 1071.80Z"/>
<circle cx="1729.6" cy="1121.5" r="20.5"/>
<path d="M1690.5 1165 L1682 1187 Q1681 1191.5 1685.5 1191 L1699.5 1188.5 L1708.5 1202.5 Q1710.5 1204.5 1712.5 1202 L1723 1180"/>
<path d="M1769.5 1165 L1778 1187 Q1779 1191.5 1774.5 1191 L1760.5 1188.5 L1751.5 1202.5 Q1749.5 1204.5 1747.5 1202 L1737 1180"/>
</g></svg>
<div class="t" style="left:1497.3px;top:1268.6px;font-size:38.5px;color:#7f8a9b;letter-spacing:0.42px;">No praises has been given</div>
<div class="t" style="left:1506.5px;top:1330.8px;font-size:25px;color:#7f8a9b;letter-spacing:0.24px;">Give praise to any employee from here.</div>
<div style="position:absolute;left:1629px;top:1403px;width:202px;height:80px;background:#5347a7;border-radius:9px"></div>
<div class="t" style="left:1661.6px;top:1430.2px;font-size:27.5px;color:#ffffff;letter-spacing:-0.27px;">Give praise</div>
<svg style="position:absolute;left:0;top:0" width="2845" height="1555"><g>
<rect x="2366.5" y="1063.5" width="123" height="141.5" rx="13" fill="#fff" stroke="#efefef" stroke-width="4"/>
<circle cx="2393" cy="1101.3" r="9" fill="#e3e3e3"/><circle cx="2393" cy="1133.7" r="9" fill="#e3e3e3"/><circle cx="2393" cy="1167.3" r="9" fill="#e3e3e3"/>
<g stroke="#ececec" stroke-width="4" stroke-linecap="round">
<path d="M2412 1097.6 L2465 1097.6 M2412 1104.8 L2465 1104.8"/>
<path d="M2412 1130 L2465 1130 M2412 1137.2 L2465 1137.2"/>
<path d="M2412 1163.5 L2465 1163.5 M2412 1170.7 L2465 1170.7"/>
</g>
<g transform="rotate(6.5 2513 1143)">
<rect x="2456" y="1107" width="114" height="72" rx="11" fill="#fff" stroke="#e8e8e8" stroke-width="4"/>
<circle cx="2479" cy="1127" r="9" fill="#6c9cd2"/>
<g stroke="#e6e6e6" stroke-width="4" stroke-linecap="round">
<path d="M2495 1122 L2548 1122 M2495 1130.5 L2556 1130.5"/>
<path d="M2470 1150 L2560 1150 M2470 1161 L2560 1161"/>
</g></g></g></svg>
<div class="t" style="left:2218.0px;top:1258.7px;font-size:38.5px;color:#7f8a9b;letter-spacing:0.63px;">No feedback has been given</div>
<div class="t" style="left:2228.7px;top:1321.0px;font-size:25px;color:#7f8a9b;letter-spacing:0.30px;">Give feedback to any employee from here.</div>
<div style="position:absolute;left:2349px;top:1393.4px;width:242px;height:79.59999999999991px;background:#5347a7;border-radius:9px"></div>
<div class="t" style="left:2382.0px;top:1420.7px;font-size:27.5px;color:#ffffff;letter-spacing:0.05px;">Give feedback</div>

</body></html>
